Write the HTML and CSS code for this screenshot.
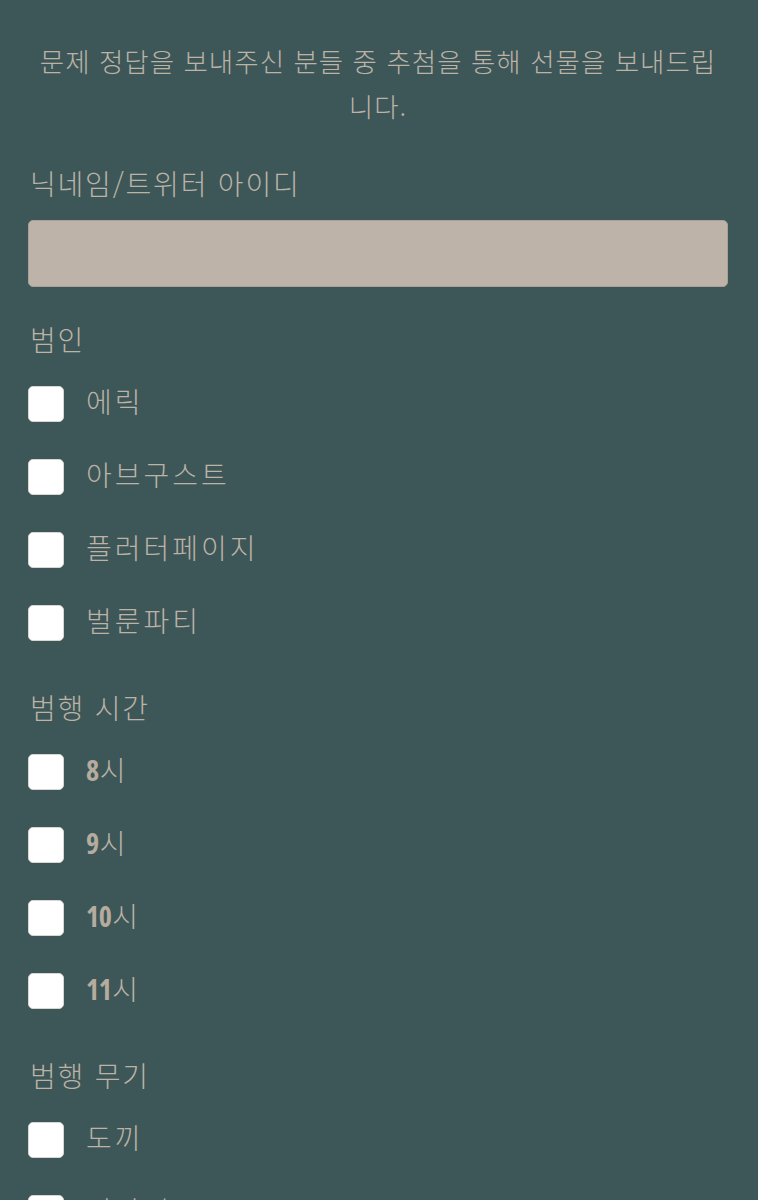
FILE: index.html
```html
<!DOCTYPE html>
<html lang="ko">
<head>
<meta charset="utf-8">
<link rel="stylesheet" href="styles.css">
</head>
<body>
<main class="form">
  <p class="intro">문제 정답을 보내주신 분들 중 추첨을 통해 선물을 보내드립니다.</p>

  <div class="field">
    <label class="label" for="nick">닉네임/트위터 아이디</label>
    <input class="text-input" id="nick" type="text">
  </div>

  <fieldset class="group">
    <legend class="label">범인</legend>
    <ul class="options">
      <li class="option"><span class="box"></span><span class="opt-text">에릭</span></li>
      <li class="option"><span class="box"></span><span class="opt-text">아브구스트</span></li>
      <li class="option"><span class="box"></span><span class="opt-text">플러터페이지</span></li>
      <li class="option"><span class="box"></span><span class="opt-text">벌룬파티</span></li>
    </ul>
  </fieldset>

  <fieldset class="group">
    <legend class="label">범행 시간</legend>
    <ul class="options">
      <li class="option"><span class="box"></span><span class="opt-text"><span class="num">8</span>시</span></li>
      <li class="option"><span class="box"></span><span class="opt-text"><span class="num">9</span>시</span></li>
      <li class="option"><span class="box"></span><span class="opt-text"><span class="num">10</span>시</span></li>
      <li class="option"><span class="box"></span><span class="opt-text"><span class="num">11</span>시</span></li>
    </ul>
  </fieldset>

  <fieldset class="group">
    <legend class="label">범행 무기</legend>
    <ul class="options">
      <li class="option"><span class="box"></span><span class="opt-text">도끼</span></li>
      <li class="option"><span class="box"></span><span class="opt-text">쇠파이프</span></li>
    </ul>
  </fieldset>
</main>
</body>
</html>
```

FILE: styles.css
```css
html, body {
  margin: 0;
  padding: 0;
  background: #3d5759;
}

body {
  font-family: "Noto Sans CJK KR", "Noto Sans", sans-serif;
  color: #bcb2a5;
  font-weight: 300;
}

.form {
  padding: 38px 30px 0 28px;
  display: flex;
  flex-direction: column;
}

.intro {
  margin: 0;
  text-align: center;
  font-size: 26.5px;
  letter-spacing: 1px;
  line-height: 45px;
  padding: 0;
}

.field {
  margin-top: 35px;
  display: flex;
  flex-direction: column;
  gap: 17px;
}

.label {
  display: block;
  font-size: 28px;
  letter-spacing: 1.8px;
  line-height: 40px;
  padding: 0 0 0 2px;
}

.text-input {
  box-sizing: border-box;
  width: 100%;
  height: 67px;
  margin: 0;
  background: #bdb3a9;
  border: 1px solid #a9a196;
  border-radius: 5px;
  outline: none;
}

.group {
  border: 0;
  margin: 32px 0 0;
  padding: 0;
  min-width: 0;
}

.group + .group {
  margin-top: 46px;
}

.group legend {
  padding: 0 0 0 2px;
  margin-bottom: 27px;
}

.options {
  list-style: none;
  margin: 0;
  padding: 0;
  display: flex;
  flex-direction: column;
  gap: 37px;
}

.option {
  display: flex;
  align-items: center;
  gap: 22px;
  height: 36px;
}

.box {
  flex: none;
  box-sizing: border-box;
  width: 36px;
  height: 36px;
  background: #fff;
  border: 1px solid #d9d6d2;
  border-radius: 5px;
}

.opt-text {
  font-size: 28px;
  letter-spacing: 3px;
  line-height: 36px;
  position: relative;
  top: -3px;
}

.num {
  font-family: "Open Sans", "DejaVu Sans", sans-serif;
  font-weight: 700;
  font-stretch: 75%;
  font-size: 28px;
  letter-spacing: -0.5px;
  margin-right: 1px;
  color: #b5ab9e;
}
```
